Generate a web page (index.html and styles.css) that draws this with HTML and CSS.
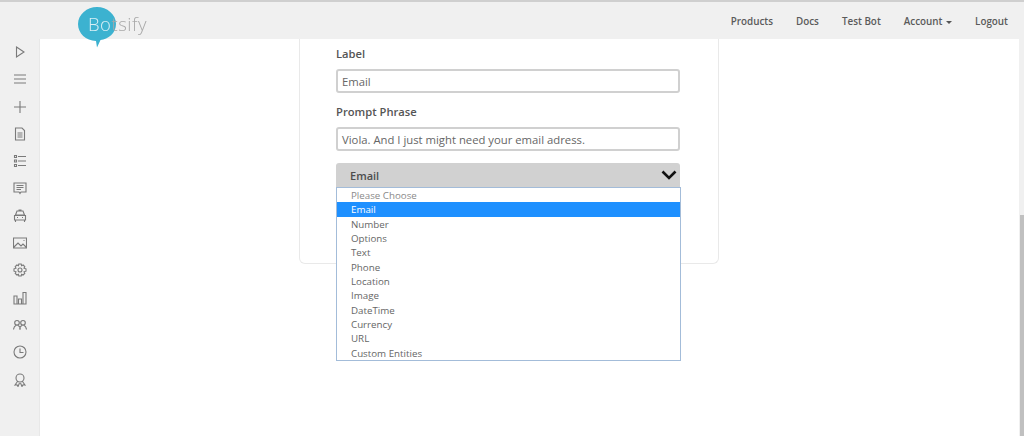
FILE: index.html
```html
<!DOCTYPE html>
<html lang="en">
<head>
<meta charset="utf-8">
<title>Botsify</title>
<link rel="stylesheet" href="styles.css">
</head>
<body>
<div class="page">
  <header class="topbar">
    <a class="logo">
      <svg class="logo-mark" width="38" height="41" viewBox="0 0 38 41"><path d="M19 0C29 0 38 7.500 38 17C38 26.500 30 32 22.500 33L19 40.500L18 34C8 33.500 0 26.500 0 17C0 7.500 9 0 19 0Z" fill="#3cb2d0"/></svg>
      <span class="logo-text"><span class="logo-on">Bo</span>tsify</span>
    </a>
    <nav class="nav">
      <a>Products</a>
      <a>Docs</a>
      <a>Test Bot</a>
      <a>Account <i class="caret"></i></a>
      <a>Logout</a>
    </nav>
  </header>
  <div class="body">
    <aside class="sidebar">
      <svg class="ico" viewBox="0 0 14 14"><path d="M3.500 2L11 7L3.500 12Z"/></svg>
      <svg class="ico" viewBox="0 0 14 14"><path d="M1 3H13M1 7H13M1 11H13"/></svg>
      <svg class="ico" viewBox="0 0 14 14"><path d="M7 1V13M1 7H13"/></svg>
      <svg class="ico" viewBox="0 0 14 14"><path d="M2.500 1H9L11.500 3.500V13H2.500ZM4.500 6H9.500M4.500 8H9.500M4.500 10H9.500"/></svg>
      <svg class="ico" viewBox="0 0 14 14"><path d="M5 2.500H13M5 7H13M5 11.500H13M1.500 1.500H3.500V3.500H1.500ZM1.500 6H3.500V8H1.500ZM1.500 10.500H3.500V12.500H1.500Z"/></svg>
      <svg class="ico" viewBox="0 0 14 14"><path d="M1 2H13V11H8L7 12.500L6 11H1ZM3.500 4.500H10.500M3.500 6.500H10.500M3.500 8.500H8"/></svg>
      <svg class="ico" viewBox="0 0 14 14"><path d="M4 2H10L11.500 6H2.500ZM1.500 6.500H12.500V11H1.500ZM2.500 11V13M11.500 11V13M4 8.500H5M9 8.500H10M5.500 1H8.500"/></svg>
      <svg class="ico" viewBox="0 0 14 14"><path d="M0.500 2H13.500V12H0.500ZM1 11L5 7L8 10L10 8L13 11M10.500 4.500H11.500"/></svg>
      <svg class="ico" viewBox="0 0 14 14"><path d="M5.800 1H8.200L8.600 2.700L10.100 2L11.800 3.700L11 5.200L13 5.800V8.200L11 8.800L11.800 10.300L10.100 12L8.600 11.300L8.200 13H5.800L5.400 11.300L3.900 12L2.200 10.300L3 8.800L1 8.200V5.800L3 5.200L2.200 3.700L3.900 2L5.400 2.700ZM7 5A2 2 0 1 0 7 9A2 2 0 1 0 7 5Z"/></svg>
      <svg class="ico" viewBox="0 0 14 14"><path d="M1 13V5H4V13ZM5.500 13V8H8.500V13ZM10 13V1.500H13V13ZM0.500 13H13.500"/></svg>
      <svg class="ico" viewBox="0 0 14 14"><path d="M4 2.500A2.300 2.300 0 1 1 4 7.100A2.300 2.300 0 1 1 4 2.500ZM10 2.500A2.300 2.300 0 1 1 10 7.100A2.300 2.300 0 1 1 10 2.500ZM0.500 11.500C0.800 9 2 7.800 3 7.300M7.500 11.500C7.200 9 6 7.800 5 7.300M6.500 11.500C6.800 9 8 7.800 9 7.300M13.500 11.500C13.200 9 12 7.800 11 7.300"/></svg>
      <svg class="ico" viewBox="0 0 14 14"><path d="M7 1A6 6 0 1 1 7 13A6 6 0 1 1 7 1ZM7 3.500V7.500H10.500"/></svg>
      <svg class="ico" viewBox="0 0 14 14"><path d="M7 1A4 4 0 1 1 7 9A4 4 0 1 1 7 1ZM4.500 8.500L2 12L4 11.800L5 13.500L6.500 10M9.500 8.500L12 12L10 11.800L9 13.500L7.500 10"/></svg>
    </aside>
    <main class="content">
      <section class="card">
        <div class="form">
          <label class="label">Label</label>
          <div class="field">Email</div>
          <label class="label prompt">Prompt Phrase</label>
          <div class="field">Viola. And I just might need your email adress.</div>
          <div class="select">
            <div class="select-head">
              <span>Email</span>
              <svg class="chevron" width="16" height="10" viewBox="0 0 16 10"><path d="M1.500 1.500L8 8L14.500 1.500" fill="none" stroke="#111" stroke-width="2.600"/></svg>
            </div>
            <ul class="menu">
              <li class="muted">Please Choose</li>
              <li class="active">Email</li>
              <li>Number</li>
              <li>Options</li>
              <li>Text</li>
              <li>Phone</li>
              <li>Location</li>
              <li>Image</li>
              <li>DateTime</li>
              <li>Currency</li>
              <li>URL</li>
              <li>Custom Entities</li>
            </ul>
          </div>
        </div>
      </section>
    </main>
    <div class="scrollbar"><div class="thumb"></div></div>
  </div>
</div>
</body>
</html>
```
FILE: styles.css
```css
* { box-sizing: border-box; }
html, body { margin: 0; height: 100%; }
body {
  font-family: "Open Sans", "Liberation Sans", sans-serif;
  color: #555;
  background: #fff;
  overflow: hidden;
}
.page {
  height: 436px;
  display: flex;
  flex-direction: column;
  filter: blur(0.35px);
}
.topbar {
  height: 39px;
  flex: none;
  background: #f0f0f0;
  border-top: 2px solid #cfcfcf;
  display: flex;
  align-items: center;
  justify-content: space-between;
  padding: 0 16px 0 78px;
  position: relative;
  z-index: 2;
}
.logo {
  position: relative;
  display: block;
  width: 70px;
  height: 37px;
}
.logo-mark {
  position: absolute;
  left: 0;
  top: 5px;
}
.logo-text {
  position: absolute;
  left: 10px;
  top: 9px;
  font-weight: 300;
  font-size: 18.500px;
  line-height: 26px;
  letter-spacing: 0.5px;
  color: #a9a9a9;
  white-space: nowrap;
}
.logo-on { color: #d8eff5; }
.nav {
  display: flex;
  align-items: center;
  gap: 23px;
  font-size: 9.850px;
  font-weight: 600;
  color: #5a5a5a;
  margin-top: 1px;
}
.caret {
  display: inline-block;
  width: 0;
  height: 0;
  margin-left: 1px;
  vertical-align: middle;
  border-top: 3px solid #555;
  border-left: 3px solid transparent;
  border-right: 3px solid transparent;
}
.body {
  flex: 1;
  display: flex;
  min-height: 0;
}
.sidebar {
  width: 40px;
  flex: none;
  background: #f0f0f0;
  border-right: 1px solid #e8e8e8;
  display: flex;
  flex-direction: column;
  align-items: center;
  gap: 13.300px;
  padding-top: 6px;
}
.ico {
  width: 14px;
  height: 14px;
  flex: none;
  fill: none;
  stroke: #7a7a7a;
  stroke-width: 1.100;
}
.content {
  flex: 1;
  min-width: 0;
  padding-left: 259px;
}
.card {
  width: 420px;
  height: 225px;
  background: #fff;
  border: 1px solid #e9e9e9;
  border-top: 0;
  border-radius: 0 0 6px 6px;
  padding: 0 36px;
}
.form {
  width: 344px;
  display: flex;
  flex-direction: column;
}
.label {
  display: block;
  font-size: 11.200px;
  font-weight: 600;
  line-height: 16px;
  color: #555;
  margin-top: 7px;
  margin-bottom: 7px;
}
.label.prompt {
  margin-top: 11px;
}
.field {
  height: 24px;
  border: 2px solid #d0d0d0;
  border-radius: 3px;
  font-size: 11.300px;
  line-height: 20px;
  padding: 1px 4px 0;
  color: #666;
  background: #fff;
}
.select {
  position: relative;
  margin-top: 12px;
}
.select-head {
  height: 24px;
  background: #d1d1d1;
  border-radius: 3px 3px 0 0;
  display: flex;
  align-items: center;
  justify-content: space-between;
  padding: 0 3px 0 14px;
  font-size: 11px;
  font-weight: 600;
  color: #4d4d4d;
}
.menu {
  position: absolute;
  left: 0;
  right: -1px;
  top: 24px;
  margin: 0;
  padding: 0;
  list-style: none;
  background: #fff;
  border: 1px solid #a3bcd9;
  font-size: 9.750px;
  height: 174px;
  color: #666;
}
.menu li {
  height: 14.350px;
  line-height: 16px;
  padding-left: 14px;
}
.menu .muted { color: #8a8a8a; }
.menu .active {
  background: #1e90ff;
  color: #fff;
}
.scrollbar {
  width: 5px;
  flex: none;
  background: #f0f0f0;
  padding-top: 176px;
}
.thumb {
  height: 221px;
  margin-left: 1px;
  background: #c0c0c0;
}
```
